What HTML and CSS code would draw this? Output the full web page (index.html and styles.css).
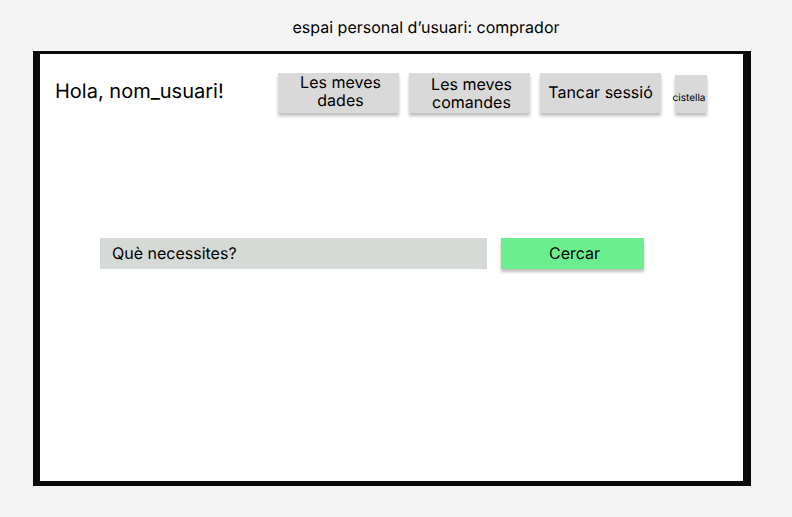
FILE: index.html
```html
<!DOCTYPE html>
<html lang="ca">
<head>
<meta charset="utf-8">
<title>espai personal d’usuari: comprador</title>
<link rel="stylesheet" href="styles.css">
</head>
<body>
<p class="caption">espai personal d’usuari: comprador</p>
<main class="screen">
  <header class="topbar">
    <h1 class="greeting">Hola, nom_usuari!</h1>
    <nav class="actions">
      <button class="btn btn-wrap btn-raised" type="button">Les meves dades</button>
      <button class="btn btn-wrap" type="button">Les meves comandes</button>
      <button class="btn" type="button">Tancar sessió</button>
      <button class="btn btn-cart" type="button">cistella</button>
    </nav>
  </header>
  <form class="search">
    <input class="search-input" type="text" placeholder="Què necessites?" aria-label="Què necessites?">
    <button class="btn btn-search" type="button">Cercar</button>
  </form>
</main>
</body>
</html>
```
FILE: styles.css
```css
* {
  box-sizing: border-box;
}

body {
  display: flex;
  flex-direction: column;
  min-height: 100vh;
  margin: 0;
  padding: 18px 41px 31px 33px;
  background: #f4f4f4;
  color: #000;
  font: 16px/18px Inter, "Liberation Sans", sans-serif;
  text-rendering: geometricPrecision;
}

.caption {
  margin: 0 0 14px;
  padding-left: 68px;
  line-height: 19px;
  text-align: center;
}

.screen {
  flex: 1;
  padding: 19px 36px 19px 15px;
  border: solid #0a0a0a;
  border-width: 3px 8px 5px 7px;
  background: #fff;
}

.topbar {
  display: flex;
  justify-content: space-between;
  align-items: flex-start;
}

.greeting {
  margin: 0;
  font-size: 20px;
  font-weight: 400;
  line-height: 36px;
}

.actions {
  display: flex;
  align-items: flex-end;
  gap: 10px;
}

.btn {
  width: 121px;
  height: 40px;
  padding: 0 8px 2px;
  border: 0;
  background: #d9d9d9;
  box-shadow: 0 3px 3px rgba(0, 0, 0, 0.25);
  color: inherit;
  font: inherit;
  text-rendering: inherit;
}

.btn-wrap {
  padding: 0 8px 0 12px;
}

.btn-raised {
  padding-bottom: 4px;
}

.btn-cart {
  display: flex;
  justify-content: center;
  align-items: center;
  width: 32px;
  height: 38px;
  margin-left: 4px;
  padding: 8px 4px 0 0;
  font-size: 10px;
}

.search {
  display: flex;
  gap: 14px;
  margin: 125px 63px 0 45px;
}

.search-input {
  flex: 1;
  min-width: 0;
  height: 31px;
  padding: 0 12px 2px;
  border: 0;
  border-radius: 0;
  background: #d6dad6;
  color: inherit;
  font: inherit;
  text-rendering: inherit;
}

.search-input::placeholder {
  color: #000;
  opacity: 1;
}

.btn-search {
  width: 143px;
  height: 31px;
  padding: 0 0 2px 4px;
  background: #6bee8e;
}
```
